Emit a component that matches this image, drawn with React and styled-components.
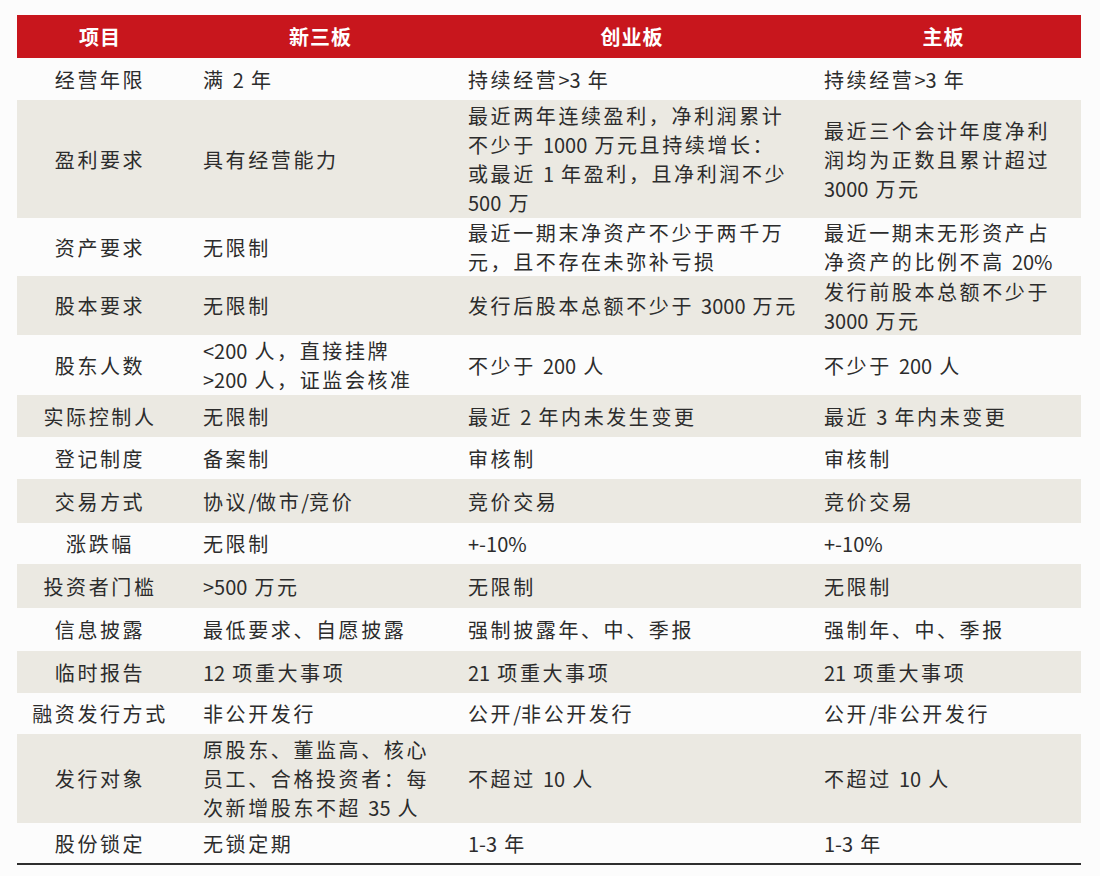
import React from "react";
import styled, { createGlobalStyle } from "styled-components";

const Global = createGlobalStyle`
  html, body { margin: 0; padding: 0; background: #fcfcfc; }
  body { font-family: "Noto Sans CJK SC", "Noto Sans", sans-serif; }
`;

const Page = styled.div`
  padding: 15px 19px 0 17px;
  width: 1064px;
`;

const Table = styled.div`
  display: flex;
  flex-direction: column;
  border-bottom: 2px solid #2e2e2e;
`;

const COLS = "166px 275px 348px 275px";

const HeaderRow = styled.div`
  display: grid;
  grid-template-columns: ${COLS};
  height: 43px;
  background: #c8161d;
`;

const HeadCell = styled.div`
  display: flex;
  align-items: center;
  justify-content: center;
  color: #fff;
  font-weight: 700;
  font-size: 20px;
  letter-spacing: 1px;
`;

const Row = styled.div`
  display: grid;
  grid-template-columns: ${COLS};
  height: ${(p) => p.$h}px;
  background: ${(p) => (p.$shade ? "#ebe9e2" : "#fcfcfc")};
`;

const Cell = styled.div`
  display: flex;
  align-items: center;
  justify-content: ${(p) => (p.$center ? "center" : "flex-start")};
  padding-left: ${(p) => p.$pad || 0}px;
  color: #2c2c2c;
  font-size: 20px;
  line-height: 29px;
  letter-spacing: 2.6px;
  white-space: nowrap;
`;

const Lines = styled.div`
  display: flex;
  flex-direction: column;
`;

const Num = styled.span`
  letter-spacing: 0;
`;

const rows = [
  [42, "经营年限", ["满 2 年"], ["持续经营>3 年"], ["持续经营>3 年"]],
  [
    118,
    "盈利要求",
    ["具有经营能力"],
    [
      "最近两年连续盈利，净利润累计",
      "不少于 1000 万元且持续增长：",
      "或最近 1 年盈利，且净利润不少",
      "500 万",
    ],
    ["最近三个会计年度净利", "润均为正数且累计超过", "3000 万元"],
  ],
  [
    58,
    "资产要求",
    ["无限制"],
    ["最近一期末净资产不少于两千万", "元，且不存在未弥补亏损"],
    ["最近一期末无形资产占", "净资产的比例不高 20%"],
  ],
  [
    59,
    "股本要求",
    ["无限制"],
    ["发行后股本总额不少于 3000 万元"],
    ["发行前股本总额不少于", "3000 万元"],
  ],
  [
    60,
    "股东人数",
    ["<200 人，直接挂牌", ">200 人，证监会核准"],
    ["不少于 200 人"],
    ["不少于 200 人"],
  ],
  [42, "实际控制人", ["无限制"], ["最近 2 年内未发生变更"], ["最近 3 年内未变更"]],
  [42, "登记制度", ["备案制"], ["审核制"], ["审核制"]],
  [44, "交易方式", ["协议/做市/竞价"], ["竞价交易"], ["竞价交易"]],
  [41, "涨跌幅", ["无限制"], ["+-10%"], ["+-10%"]],
  [44, "投资者门槛", [">500 万元"], ["无限制"], ["无限制"]],
  [43, "信息披露", ["最低要求、自愿披露"], ["强制披露年、中、季报"], ["强制年、中、季报"]],
  [42, "临时报告", ["12 项重大事项"], ["21 项重大事项"], ["21 项重大事项"]],
  [41, "融资发行方式", ["非公开发行"], ["公开/非公开发行"], ["公开/非公开发行"]],
  [
    89,
    "发行对象",
    ["原股东、董监高、核心", "员工、合格投资者：每", "次新增股东不超 35 人"],
    ["不超过 10 人"],
    ["不超过 10 人"],
  ],
  [40, "股份锁定", ["无锁定期"], ["1-3 年"], ["1-3 年"]],
];

// Latin runs (digits, signs) are set tighter than the CJK text, as in the source.
const renderLine = (line) =>
  line.split(/([0-9<>+\-%/.]+)/).map((part, i) =>
    /^[0-9<>+\-%/.]+$/.test(part) ? <Num key={i}>{part}</Num> : part
  );

const TextLines = ({ lines }) => (
  <Lines>
    {lines.map((l, i) => (
      <span key={i}>{renderLine(l)}</span>
    ))}
  </Lines>
);

export default function App() {
  return (
    <>
      <Global />
      <Page>
        <Table>
          <HeaderRow>
            <HeadCell>项目</HeadCell>
            <HeadCell>新三板</HeadCell>
            <HeadCell>创业板</HeadCell>
            <HeadCell>主板</HeadCell>
          </HeaderRow>
          {rows.map(([h, name, a, b, c], i) => (
            <Row key={name} $h={h} $shade={i % 2 === 1}>
              <Cell $center>{name}</Cell>
              <Cell $pad={20}>
                <TextLines lines={a} />
              </Cell>
              <Cell $pad={10}>
                <TextLines lines={b} />
              </Cell>
              <Cell $pad={18}>
                <TextLines lines={c} />
              </Cell>
            </Row>
          ))}
        </Table>
      </Page>
    </>
  );
}
